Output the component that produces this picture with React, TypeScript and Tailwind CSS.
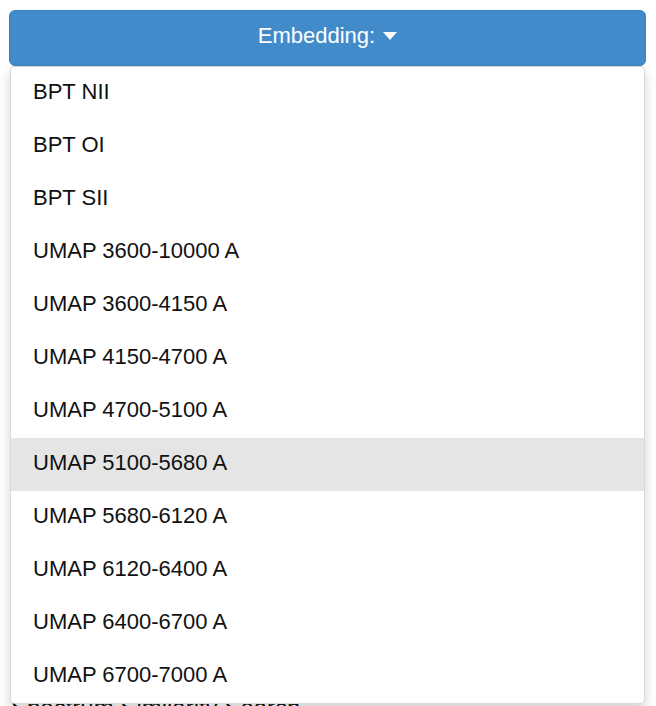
const options = [
  'BPT NII',
  'BPT OI',
  'BPT SII',
  'UMAP 3600-10000 A',
  'UMAP 3600-4150 A',
  'UMAP 4150-4700 A',
  'UMAP 4700-5100 A',
  'UMAP 5100-5680 A',
  'UMAP 5680-6120 A',
  'UMAP 6120-6400 A',
  'UMAP 6400-6700 A',
  'UMAP 6700-7000 A',
];

const active = 'UMAP 5100-5680 A';

export default function App() {
  return (
    <div className="min-h-screen bg-white pt-[10px] pl-[9px] pr-[10px] font-['Liberation_Sans',Arial,sans-serif]">
      {/* Dropdown */}
      <div className="relative">
        <button className="flex h-[56px] w-full items-center justify-center rounded-[6px] border border-[#3a80c0] bg-[#428bca] pb-[6px] text-[22px] text-white">
          <span>Embedding:</span>
          <span className="ml-[8px] mt-[1px] h-0 w-0 border-x-[7px] border-t-[8px] border-x-transparent border-t-white" />
        </button>

        <ul className="absolute left-[1px] right-[1px] top-full z-10 overflow-hidden rounded-[5px] border border-black/15 bg-white shadow-[0_6px_12px_rgba(0,0,0,0.175)]">
          {options.map((opt) => (
            <li
              key={opt}
              className={`flex h-[53px] items-center pb-[5px] pl-[22px] text-[22px] text-[#111] ${
                opt === active ? 'bg-[#e5e5e5]' : ''
              }`}
            >
              {opt}
            </li>
          ))}
        </ul>
      </div>

      {/* Content underneath the open menu */}
      <h2 className="mt-[630px] pl-[2px] text-[24px] leading-[24px] font-normal text-[#111]">
        Spectrum Similarity Search
      </h2>
    </div>
  );
}
